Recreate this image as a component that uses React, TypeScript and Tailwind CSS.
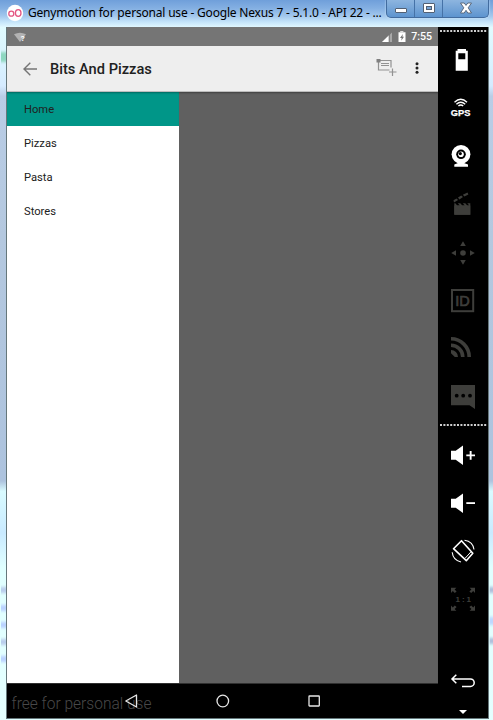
import React from 'react';

type RowProps = { children: React.ReactNode; dim?: boolean };

function Tool({ children, dim = false }: RowProps) {
  return (
    <svg viewBox="0 0 50 48" className={`block h-12 w-[50px] shrink-0 ${dim ? 'text-[#3e3e3b]' : 'text-white'}`} fill="currentColor">
      {children}
    </svg>
  );
}

function Dots() {
  return (
    <svg viewBox="0 0 50 2" className="block h-0.5 w-[50px] shrink-0 text-[#d0d0d0]" fill="currentColor">
      {Array.from({ length: 14 }, (_, i) => (
        <rect key={i} x={2 + i * 3.4} y="0" width="2" height="2" />
      ))}
    </svg>
  );
}

function Speaker() {
  return <path d="M13 19.8h4.7L25 14.5V34l-7.3-5.3H13z" />;
}

function Sidebar() {
  return (
    <aside className="flex w-[50px] shrink-0 flex-col bg-black pt-[3px]">
      <Dots />
      <div className="h-1 shrink-0" />
      <Tool>
        <path fillRule="evenodd" d="M19.5 13h8.5v1.8h1.8v20H17.7v-20h1.8zM20.3 17.3h7v6h-7z" />
      </Tool>
      <Tool>
        <g fill="none" stroke="currentColor" strokeWidth="1.4">
          <path d="M16.5 18.2Q22.8 12.5 29 18.2M18.4 20.2Q22.8 16.2 27.2 20.2M20.4 22Q22.8 19.9 25.2 22" />
        </g>
        <text x="12.8" y="32" textLength="19.6" lengthAdjust="spacingAndGlyphs" className="font-['Liberation_Sans',sans-serif] text-[9px] font-bold" stroke="currentColor" strokeWidth=".25">GPS</text>
      </Tool>
      <Tool>
        <circle cx="23" cy="22.3" r="9.4" />
        <path d="M20 29h6v2l4 1.5v2.2H16.3v-2.2l3.7-1.5z" />
        <circle cx="23" cy="22.3" r="4.8" fill="#000" />
        <circle cx="23" cy="22.3" r="2.8" />
        <circle cx="22.3" cy="21.6" r="1.6" fill="#000" />
      </Tool>
      <Tool dim>
        <path d="M16.3 23.3h1l2 2.2h2.5l-2-2.2h2.5l2 2.2h2.5l-2-2.2h2.5l2 2.2h2l-2-2.2h3v11.4h-16z" />
        <path d="M16.3 25.5h16v9.2h-16z" />
        <path d="M15.5 20.3l3-1.8 1.6 1.5-4.1 2.4zM20 17.5l3.2-1.9 1.8 1.5-3.6 2.3zM24.8 14.7l4.7-2.2.9 2-4 2.1z" />
      </Tool>
      <Tool dim>
        <circle cx="25" cy="25" r="2.8" />
        <path d="M25 13.2l2.8 4.7h-5.6zM25 36.8l2.8-4.7h-5.6zM13.2 25l4.8-2.8v5.6zM36.8 25L32 22.2v5.6z" />
      </Tool>
      <Tool dim>
        <rect x="14" y="14" width="21.2" height="21.2" fill="none" stroke="currentColor" strokeWidth="2" />
        <text x="17.3" y="30.3" textLength="14.5" lengthAdjust="spacingAndGlyphs" className="font-['Liberation_Sans',sans-serif] text-[15px]" stroke="currentColor" strokeWidth=".7">ID</text>
      </Tool>
      <Tool dim>
        <path d="M13 26a7 7 0 0 1 7 7h-3.2L13 29.2z" />
        <path d="M13 21.2A11.8 11.8 0 0 1 24.8 33M13 14.8A18.2 18.2 0 0 1 31.2 33" fill="none" stroke="currentColor" strokeWidth="3.6" />
      </Tool>
      <Tool dim>
        <path d="M13 13h24v24l-5.5-3.7H13z" />
        <g fill="#000"><circle cx="18.7" cy="23.7" r="1.9" /><circle cx="25.2" cy="23.7" r="1.9" /><circle cx="32" cy="23.7" r="1.9" /></g>
      </Tool>
      <div className="h-1 shrink-0" />
      <Dots />
      <div className="h-[5px] shrink-0" />
      <Tool>
        <Speaker />
        <path d="M28.3 23.4h3.4V20h1.9v3.4H37v1.9h-3.4v3.5h-1.9v-3.5h-3.4z" />
      </Tool>
      <Tool>
        <Speaker />
        <path d="M28.3 23.2H37v1.8h-8.7z" />
      </Tool>
      <Tool>
        <g fill="none" stroke="currentColor" strokeWidth="1.6" strokeLinejoin="round">
          <path d="M23.5 13.7L34.8 26.3L28.3 33.7L15.5 21.7z" />
          <path d="M32.8 25L27 31.4" strokeWidth="1" />
          <path d="M26.5 13.2Q35 14.5 36 22.5M14.2 25.2Q15 33 23 35" strokeWidth="1.1" />
        </g>
      </Tool>
      <Tool dim>
        <path d="M13 12.8h5.4l-1.8 1.7 2 2-1.8 1.5-2-2-1.8 2zM37 12.8h-5.4l1.8 1.7-2 2 1.8 1.5 2-2 1.8 2zM13 35.8h5.4l-1.8-1.7 2-2-1.8-1.5-2 2-1.8-2zM37 35.8h-5.4l1.8-1.7-2-2 1.8-1.5 2 2 1.8-2z" />
        <text x="17.5" y="27" textLength="15.5" className="font-['Liberation_Sans',sans-serif] text-[8px] font-bold">1:1</text>
      </Tool>
      <div className="h-[34px] shrink-0" />
      <Tool>
        <g fill="none" stroke="currentColor" strokeWidth="1.5">
          <path d="M18.3 17.8L14 22l4.3 4.2M14 22h18.5a3.7 3.7 0 0 1 0 7.4H24" />
        </g>
      </Tool>
      <svg viewBox="0 0 50 13" className="block h-[13px] w-[50px] shrink-0" fill="#fff"><path d="M21 5h8l-4 4z" /></svg>
    </aside>
  );
}

function TitleBar() {
  return (
    <header className="flex h-[27px] shrink-0 items-start bg-[linear-gradient(180deg,#6f9fda_0px,#83afe2_8px,#a2c7ed_16px,#c5e5fa_22px,#e0f7ff_27px)]">
      <svg viewBox="0 0 18 18" className="ml-[6px] mt-1 h-[18px] w-[18px] shrink-0">
        <circle cx="9" cy="9" r="8.2" fill="#fff" />
        <g fill="none" stroke="#e45682" strokeWidth="1.3"><circle cx="5.3" cy="9.7" r="2.5" /><ellipse cx="12.2" cy="9" rx="2.8" ry="3.3" /></g>
      </svg>
      <h1 className="ml-1 mr-[4px] mt-[5px] w-[354px] shrink-0 whitespace-nowrap font-['Noto_Sans',sans-serif] text-[12px] leading-4 tracking-[-0.19px] text-black">
        Genymotion for personal use - Google Nexus 7 - 5.1.0 - API 22 - ...
      </h1>
      <div className="flex h-[18px] w-[103px] shrink-0 overflow-hidden rounded-b-[5px] border border-t-0 border-[#426c9f] bg-gradient-to-b from-[#8db5df] to-[#5d94cf] shadow-[0_0_2px_#d9f0ff]">
        <div className="flex w-[28px] items-center justify-center border-r border-[#4572a7]">
          <div className="mt-[3px] h-[5px] w-3 rounded-[1px] border border-[#526073] bg-white" />
        </div>
        <div className="flex w-[28px] items-center justify-center border-r border-[#4572a7]">
          <div className="mb-0.5 flex h-[10px] w-3 items-center justify-center rounded-[1px] border border-[#526073] bg-white">
            <div className="h-1 w-[6px] border border-[#526073] bg-[#79a5d4]" />
          </div>
        </div>
        <div className="flex flex-1 items-center justify-center">
          <svg viewBox="0 0 14 12" className="mb-0.5 h-3 w-3.5"><path d="M1.5 1h3.7L7 3.4 8.8 1h3.7L9.2 5.8l3.3 5.2H8.8L7 8.3 5.2 11H1.5l3.3-5.2z" fill="#fff" stroke="#526073" strokeWidth=".9" /></svg>
        </div>
      </div>
    </header>
  );
}

function StatusBar() {
  return (
    <div className="flex h-[19px] shrink-0 items-center bg-[#757575] text-white">
      <svg viewBox="0 0 14 12" className="ml-[6px] h-3 w-3.5">
        <path d="M1 3.2Q7 .1 13 3.2L7 11z" fill="#b2b2b2" />
        <text x="7.8" y="10.3" className="fill-white font-['Roboto',sans-serif] text-[8px] font-bold">?</text>
      </svg>
      <svg viewBox="0 0 10 10" className="ml-auto mr-[6px] mt-px h-[10px] w-[10px]">
        <path d="M0 10L10 .5V10z" fill="#a8a8a8" /><path d="M0 10L7 3.3V10z" fill="#fff" /><path d="M7.2 2v8" stroke="#757575" />
      </svg>
      <svg viewBox="0 0 8 12" className="mr-[5px] h-3 w-2" fill="#fff"><path d="M2.2 1.5h3.2V.3H2.2zM.5 1.3h7V11h-7z" /><path d="M4.9 3L2 7h1.7L3.2 9.8 6 5.8H4.4z" fill="#757575" /></svg>
      <span className="mr-[6px] mt-0.5 font-['Roboto',sans-serif] text-[10.6px] font-medium leading-none">7:55</span>
    </div>
  );
}

function Toolbar() {
  return (
    <div className="flex h-[46px] shrink-0 items-center border-b border-[#bdbdbd] bg-[#eee]">
      <svg viewBox="0 0 14 14" className="ml-4 h-3.5 w-3.5 shrink-0" fill="none" stroke="#757575" strokeWidth="1.4"><path d="M7.3.7L1 7l6.3 6.3M1 7h13" /></svg>
      <h2 className="ml-[13px] mt-px whitespace-nowrap font-['Roboto',sans-serif] text-[14.65px] font-medium leading-5 text-[#212121]">Bits And Pizzas</h2>
      <svg viewBox="0 0 21 18" className="mb-[3px] ml-auto mr-[18px] h-[18px] w-[21px] shrink-0" fill="none" stroke="#929292">
        <path d="M2.5 4v8h11M4 2.5h11v7M5 5.5h8M5 7.5h8M13 14h7.5M16.5 10.5V18" strokeWidth="1.2" />
        <rect x=".5" y="1" width="4" height="3.5" fill="#808080" stroke="none" />
      </svg>
      <svg viewBox="0 0 4 12" className="mb-px mr-[19px] h-3 w-1 shrink-0" fill="#222"><circle cx="2" cy="1.7" r="1.5" /><circle cx="2" cy="6" r="1.5" /><circle cx="2" cy="10.3" r="1.5" /></svg>
    </div>
  );
}

function Drawer() {
  return (
    <nav className="w-[172px] shrink-0 bg-white font-['Roboto',sans-serif] text-[11.2px] text-[#212121]">
      <div className="flex h-[34px] items-center bg-[#009688] pl-[17px] pt-0.5 shadow-[inset_0_2px_2px_-1px_#00695f]">Home</div>
      {['Pizzas', 'Pasta', 'Stores'].map((name) => (
        <div key={name} className="flex h-[34px] items-center pl-[17px] pt-0.5">{name}</div>
      ))}
    </nav>
  );
}

function NavigationBar() {
  return (
    <div className="relative flex h-[35px] shrink-0 items-center border-t border-[#303030] bg-black">
      <svg viewBox="0 0 431 34" className="absolute inset-0 h-[34px] w-[431px]">
        <text x="4.5" y="24.5" textLength="140" className="fill-[#484848] font-['Roboto',sans-serif] text-[17.3px] font-light" lengthAdjust="spacingAndGlyphs">free for personal use</text>
        <g fill="none" stroke="#e6e6e6" strokeWidth="1.3">
          <path d="M118.8 17L129.5 11v12z" strokeLinejoin="round" />
          <circle cx="215.8" cy="17" r="5.8" />
          <rect x="302" y="12" width="10.3" height="10" rx=".5" />
        </g>
      </svg>
    </div>
  );
}

function GlassEdge({ side }: { side: 'left' | 'right' }) {
  const spots = side === 'left'
    ? [{ y: 30, c: '#8ed7c0', h: 10 }, { y: 563, c: '#b9cdec', h: 6 }, { y: 581, c: '#b9d1ff', h: 6 }, { y: 598, c: '#b9d1ff', h: 6 }, { y: 615, c: '#b9cdec', h: 6 }, { y: 632, c: '#b9d1ff', h: 6 }]
    : [{ y: 563, c: '#aebfdb', h: 6 }, { y: 594, c: '#bdd8ff', h: 8 }, { y: 614, c: '#aebfdb', h: 6 }];
  return (
    <svg viewBox="0 0 6 693" preserveAspectRatio="none" className={side === 'left' ? 'h-[693px] w-[6px] shrink-0' : 'h-[693px] w-1 shrink-0'}>
      <defs>
        <linearGradient id={`edge-${side}`} x1="0" y1="0" x2="0" y2="1">
          <stop offset="0" stopColor="#e0fbff" /><stop offset=".055" stopColor="#d9f2ff" /><stop offset=".085" stopColor="#d5ebff" /><stop offset=".1" stopColor="#b9cde6" />
          <stop offset=".3" stopColor="#b4c8df" /><stop offset=".655" stopColor="#adc3de" /><stop offset=".67" stopColor="#d9fbff" /><stop offset=".73" stopColor="#c9eaff" /><stop offset=".78" stopColor="#e0ffff" /><stop offset="1" stopColor="#e4ffff" />
        </linearGradient>
        <filter id={`soft-${side}`} x="-50%" y="-100%" width="200%" height="300%"><feGaussianBlur stdDeviation="0.5 1.5" /></filter>
      </defs>
      <rect width="6" height="693" fill={`url(#edge-${side})`} />
      {spots.map((s) => <rect key={s.y} x="1" y={s.y - s.h / 2} width="5" height={s.h} fill={s.c} filter={`url(#soft-${side})`} />)}
    </svg>
  );
}

export default function App() {
  return (
    <div className="flex h-[720px] w-[493px] flex-col overflow-hidden bg-[#e0ffff]">
      <TitleBar />
      <div className="flex h-[693px]">
        <GlassEdge side="left" />
        <main className="flex h-[692px] w-[483px] shrink-0 border-b border-l border-r border-[#66777b]">
          <section className="flex w-[431px] shrink-0 flex-col">
            <StatusBar />
            <Toolbar />
            <div className="flex min-h-0 flex-1 bg-[#606060] shadow-[inset_0_2px_2px_-1px_#404040]">
              <Drawer />
            </div>
            <NavigationBar />
          </section>
          <Sidebar />
        </main>
        <GlassEdge side="right" />
      </div>
    </div>
  );
}
